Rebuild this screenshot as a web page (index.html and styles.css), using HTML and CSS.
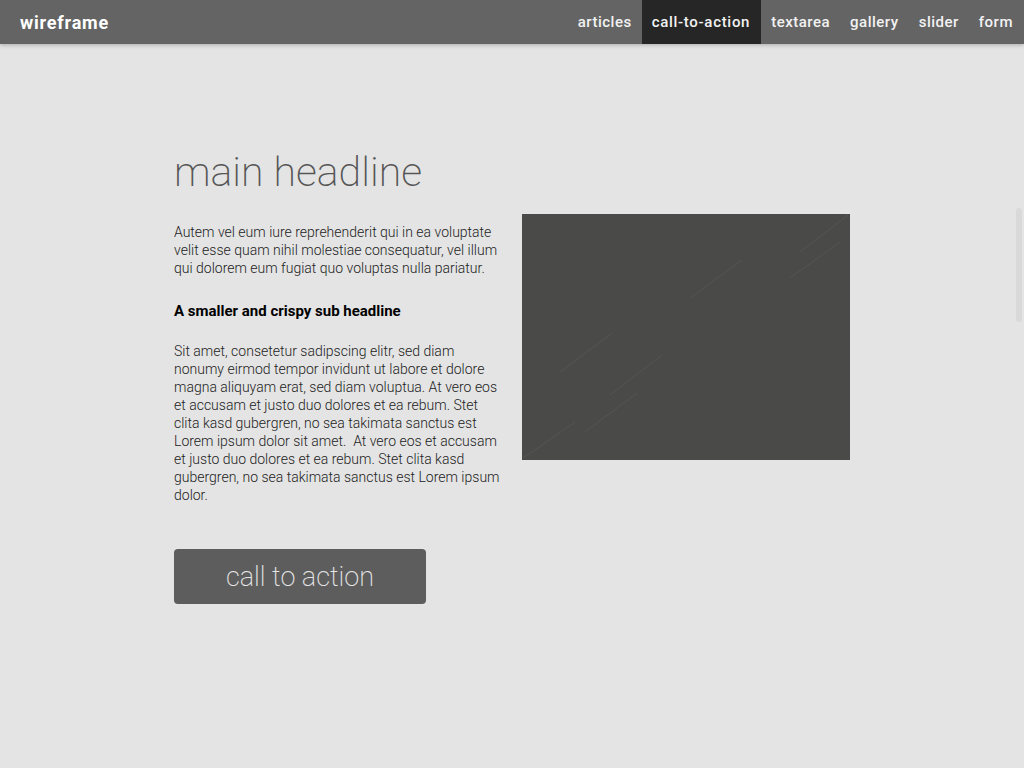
FILE: index.html
```html
<!DOCTYPE html>
<html lang="en">
<head>
<meta charset="utf-8">
<title>wireframe</title>
<link rel="stylesheet" href="styles.css">
</head>
<body>
<header class="topbar">
  <div class="brand">wireframe</div>
  <nav class="menu">
    <a class="menu-item" href="#">articles</a>
    <a class="menu-item active" href="#">call-to-action</a>
    <a class="menu-item" href="#">textarea</a>
    <a class="menu-item" href="#">gallery</a>
    <a class="menu-item" href="#">slider</a>
    <a class="menu-item" href="#">form</a>
  </nav>
</header>
<main class="content">
  <h1 class="headline">main headline</h1>
  <div class="row">
    <div class="text-col">
      <p class="intro">Autem vel eum iure reprehenderit qui in ea voluptate velit esse quam nihil molestiae consequatur, vel illum qui dolorem eum fugiat quo voluptas nulla pariatur.</p>
      <h2 class="subhead">A smaller and crispy sub headline</h2>
      <p class="body">Sit amet, consetetur sadipscing elitr, sed diam nonumy eirmod tempor invidunt ut labore et dolore magna aliquyam erat, sed diam voluptua. At vero eos et accusam et justo duo dolores et ea rebum. Stet clita kasd gubergren, no sea takimata sanctus est Lorem ipsum dolor sit amet.&nbsp; At vero eos et accusam et justo duo dolores et ea rebum. Stet clita kasd gubergren, no sea takimata sanctus est Lorem ipsum dolor.</p>
      <a class="cta" href="#">call to action</a>
    </div>
    <div class="image-col">
      <svg class="picture" width="328" height="246" viewBox="0 0 328 246">
        <rect width="328" height="246" fill="#4a4a48"/>
        <g stroke="#5a5a57" stroke-width="1" opacity="0.7">
          <line x1="1" y1="244" x2="53" y2="208"/>
          <line x1="38" y1="158" x2="90" y2="119"/>
          <line x1="88" y1="181" x2="140" y2="141"/>
          <line x1="63" y1="218" x2="115" y2="179"/>
          <line x1="168" y1="84" x2="220" y2="46"/>
          <line x1="268" y1="64" x2="318" y2="28"/>
          <line x1="278" y1="38" x2="326" y2="1"/>
        </g>
      </svg>
    </div>
  </div>
</main>
<div class="scroll-thumb"></div>
</body>
</html>
```

FILE: styles.css
```css
* { box-sizing: border-box; }

html, body {
  margin: 0;
  padding: 0;
  background: #e4e4e4;
  font-family: Roboto, "Liberation Sans", sans-serif;
  overflow: hidden;
}

.topbar {
  height: 44px;
  background: #646464;
  display: flex;
  align-items: stretch;
  justify-content: space-between;
  box-shadow: 0 1px 4px rgba(0, 0, 0, 0.25);
  position: relative;
  z-index: 2;
}

.brand {
  color: #fff;
  font-weight: 700;
  font-size: 18px;
  letter-spacing: 0.8px;
  padding-left: 20px;
  display: flex;
  align-items: center;
}

.menu {
  display: flex;
  align-items: stretch;
}

.menu-item {
  color: #f2f2f2;
  text-decoration: none;
  font-size: 15px;
  font-weight: 500;
  letter-spacing: 0.5px;
  padding: 0 10px;
  display: flex;
  align-items: center;
}

.menu-item:last-child { padding-right: 11px; }

.menu-item.active {
  background: #262626;
  padding: 0 11px 0 10px;
  letter-spacing: 0.7px;
}

.content {
  width: 676px;
  margin: 0 auto;
  padding-top: 104px;
}

.headline {
  margin: 0;
  font-weight: 200;
  font-size: 41px;
  line-height: 48px;
  color: #555;
}

.row {
  display: flex;
  gap: 20px;
  margin-top: 18px;
}

.text-col {
  width: 328px;
}

.intro, .body {
  margin: 0;
  font-size: 14px;
  font-weight: 300;
  line-height: 18px;
  color: #222;
}

.intro { margin-top: 9px; }

.subhead {
  margin: 25px 0 0;
  font-size: 15px;
  font-weight: 700;
  line-height: 18px;
  color: #000;
}

.body { margin-top: 22px; }

.cta {
  display: flex;
  align-items: center;
  justify-content: center;
  width: 252px;
  height: 55px;
  margin-top: 45px;
  background: #5d5d5d;
  border-radius: 4px;
  color: #e6e6e6;
  text-decoration: none;
  font-weight: 200;
  font-size: 27px;
}

.image-col {
  width: 328px;
}

.picture { display: block; }

.scroll-thumb {
  position: absolute;
  right: 2px;
  top: 208px;
  width: 6px;
  height: 114px;
  border-radius: 3px;
  background: #d9d9d9;
}
```
